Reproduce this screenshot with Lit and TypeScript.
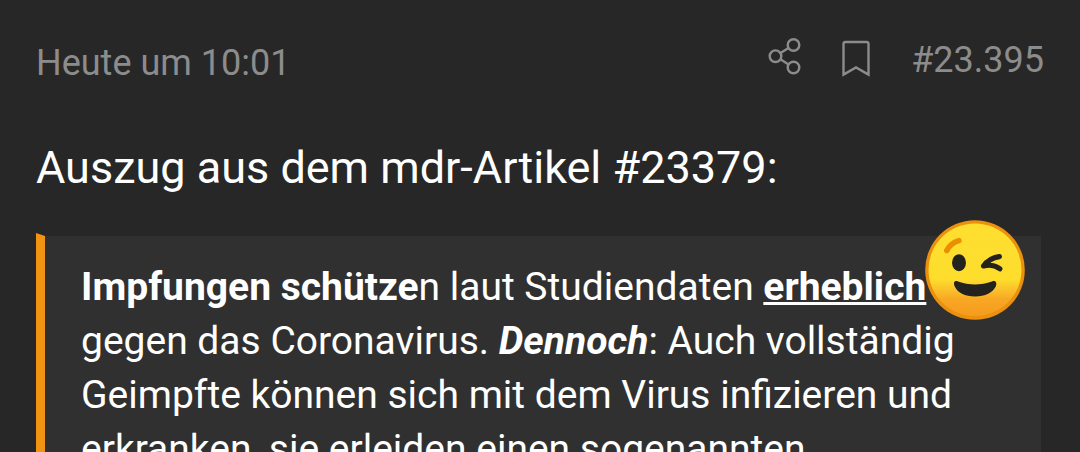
import { LitElement, html, css } from "lit";
import { customElement } from "lit/decorators.js";

@customElement("winking-face")
class WinkingFace extends LitElement {
  static styles = css`
    :host {
      display: block;
      width: 100px;
      height: 100px;
    }
    svg {
      display: block;
      width: 100%;
      height: 100%;
    }
  `;

  render() {
    return html`
      <svg viewBox="0 0 100 100" role="img" aria-label="Zwinkern">
        <defs>
          <linearGradient id="skin" x1="0" y1="0" x2="0" y2="1">
            <stop offset="0" stop-color="#fddf30" />
            <stop offset="0.6" stop-color="#fedd2c" />
            <stop offset="0.72" stop-color="#fbc02a" />
            <stop offset="0.82" stop-color="#f8a724" />
            <stop offset="1" stop-color="#f59c1c" />
          </linearGradient>
        </defs>
        <circle cx="50" cy="50" r="49.8" fill="#eb910e" />
        <ellipse cx="50" cy="49.8" rx="46.5" ry="46.3" fill="url(#skin)" />
        <path d="M21.8 30.5 Q25.5 23 33.8 20.6" fill="none" stroke="#eb8f00" stroke-width="5.6" stroke-linecap="round" />
        <ellipse cx="34" cy="42.8" rx="7" ry="8.5" fill="#24221f" />
        <path d="M74.4 36.6 Q64 38 58.6 46 Q68 43.6 74.8 48.8" fill="none" stroke="#24221f" stroke-width="5.2" stroke-linecap="round" stroke-linejoin="round" />
        <path d="M29.5 66 C28 62 30 60.3 33 61.4 C44 65.4 56 65.4 67 61.4 C70 60.3 72.2 62 71 66 C68 72.5 60 76.5 50.2 76.5 C40 76.5 32.2 72.5 29.5 66 Z" fill="#24221f" />
      </svg>
    `;
  }
}

@customElement("app-root")
class AppRoot extends LitElement {
  static styles = css`
    :host {
      display: block;
      box-sizing: border-box;
      height: 100vh;
      overflow: hidden;
      padding: 36px 36px 0;
      background: #272727;
      color: #ffffff;
      font-family: Roboto, sans-serif;
    }
    .meta {
      display: flex;
      align-items: flex-start;
      justify-content: space-between;
      color: #8c8c8c;
      font-size: 36px;
      line-height: 48px;
    }
    .date {
      padding-top: 3px;
    }
    .actions {
      display: flex;
      align-items: flex-start;
      gap: 36px;
    }
    .icon {
      display: block;
      margin: 0;
      padding: 0;
      border: 0;
      background: none;
      color: inherit;
      cursor: pointer;
    }
    .icon svg {
      display: block;
      width: 38px;
      height: 42px;
      fill: none;
      stroke: currentColor;
      stroke-width: 2.4;
    }
    .number {
      color: inherit;
      text-decoration: none;
    }
    .lead {
      margin: 49px 0 34px;
      font-size: 45px;
      line-height: 63px;
    }
    .quote {
      margin: 0;
      padding: 24px 36px;
      border: 3px solid #272727;
      border-left: 9px solid #f19413;
      background: #303030;
      font-size: 39px;
      line-height: 54px;
    }
    .quote p {
      margin: 0;
    }
    .quote u {
      text-decoration-thickness: 3px;
    }
    .anchor {
      position: relative;
    }
    .wink {
      position: absolute;
      left: 100%;
      bottom: -10px;
      margin-left: -1px;
    }
  `;

  render() {
    return html`
      <article>
        <header class="meta">
          <time class="date">Heute um 10:01</time>
          <div class="actions">
            <button class="icon" type="button" aria-label="Teilen">
              <svg viewBox="0 0 38 42">
                <circle cx="12.5" cy="20.2" r="5.8" />
                <circle cx="30.5" cy="9" r="5.8" />
                <circle cx="30.5" cy="31.5" r="5.8" />
                <path d="M17.5 17.1 L25.5 12.1 M17.5 23.3 L25.5 28.4" />
              </svg>
            </button>
            <button class="icon" type="button" aria-label="Lesezeichen">
              <svg viewBox="0 0 38 42">
                <path d="M6.5 38.6 V8 Q6.5 6 8.5 6 H29.5 Q31.5 6 31.5 8 V38.6 L19 31.5 Z" />
              </svg>
            </button>
            <a class="number" href="#23395">#23.395</a>
          </div>
        </header>
        <p class="lead">Auszug aus dem mdr-Artikel #23379:</p>
        <blockquote class="quote">
          <p>
            <b>Impfungen schütze</b>n laut Studiendaten
            <span class="anchor"><b><u>erheblich</u></b><winking-face class="wink"></winking-face></span>
            gegen das Coronavirus. <b><i>Dennoch</i></b>: Auch vollständig
            Geimpfte können sich mit dem Virus infizieren und erkranken, sie
            erleiden einen sogenannten
          </p>
        </blockquote>
      </article>
    `;
  }
}
